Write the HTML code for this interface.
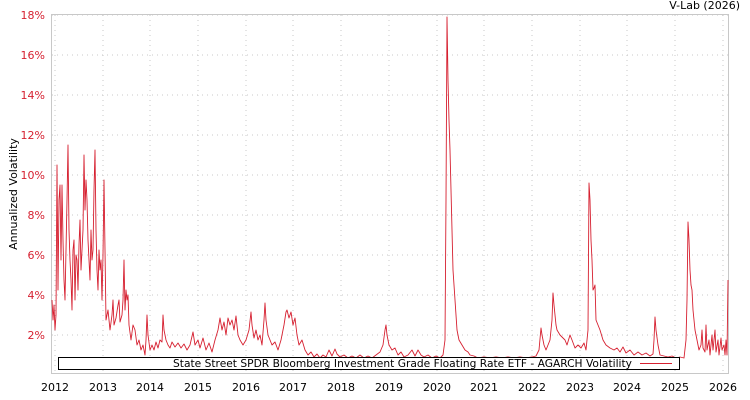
<!DOCTYPE html>
<html><head><meta charset="utf-8"><style>
html,body{margin:0;padding:0;background:#fff;width:750px;height:400px;overflow:hidden}
svg text{font-family:"DejaVu Sans","Liberation Sans",sans-serif}
</style></head><body>
<svg width="750" height="400" viewBox="0 0 750 400" xmlns="http://www.w3.org/2000/svg">
<rect x="51.5" y="14.5" width="677" height="359" fill="#fff" stroke="#c8c8c8"/>
<g stroke="#c8c8c8" stroke-dasharray="1,4" stroke-width="1">
<line x1="52" x2="728" y1="15" y2="15"/><line x1="52" x2="728" y1="55" y2="55"/><line x1="52" x2="728" y1="95" y2="95"/><line x1="52" x2="728" y1="135" y2="135"/><line x1="52" x2="728" y1="175" y2="175"/><line x1="52" x2="728" y1="215" y2="215"/><line x1="52" x2="728" y1="255" y2="255"/><line x1="52" x2="728" y1="295" y2="295"/><line x1="52" x2="728" y1="335" y2="335"/>
<line y1="15" y2="373" x1="55" x2="55"/><line y1="15" y2="373" x1="103" x2="103"/><line y1="15" y2="373" x1="150" x2="150"/><line y1="15" y2="373" x1="198" x2="198"/><line y1="15" y2="373" x1="246" x2="246"/><line y1="15" y2="373" x1="293" x2="293"/><line y1="15" y2="373" x1="341" x2="341"/><line y1="15" y2="373" x1="389" x2="389"/><line y1="15" y2="373" x1="437" x2="437"/><line y1="15" y2="373" x1="484" x2="484"/><line y1="15" y2="373" x1="532" x2="532"/><line y1="15" y2="373" x1="580" x2="580"/><line y1="15" y2="373" x1="627" x2="627"/><line y1="15" y2="373" x1="675" x2="675"/><line y1="15" y2="373" x1="723" x2="723"/>
</g>
<g fill="#d62030" font-size="11" text-anchor="end">
<text x="45" y="19">18%</text><text x="45" y="59">16%</text><text x="45" y="99">14%</text><text x="45" y="139">12%</text><text x="45" y="179">10%</text><text x="45" y="219">8%</text><text x="45" y="259">6%</text><text x="45" y="299">4%</text><text x="45" y="339">2%</text>
</g>
<g fill="#000" font-size="11" text-anchor="middle">
<text x="55" y="391">2012</text><text x="103" y="391">2013</text><text x="150" y="391">2014</text><text x="198" y="391">2015</text><text x="246" y="391">2016</text><text x="293" y="391">2017</text><text x="341" y="391">2018</text><text x="389" y="391">2019</text><text x="437" y="391">2020</text><text x="484" y="391">2021</text><text x="532" y="391">2022</text><text x="580" y="391">2023</text><text x="627" y="391">2024</text><text x="675" y="391">2025</text><text x="723" y="391">2026</text>
</g>
<text x="740" y="9" font-size="11" text-anchor="end">V-Lab (2026)</text>
<text transform="translate(17,194) rotate(-90)" font-size="11" text-anchor="middle">Annualized Volatility</text>
<polyline fill="none" stroke="#d62030" stroke-width="0.9" stroke-linejoin="round" points="
52,300 53,320 54,305 55,330 56,315 57,165 58,290 59,200 60,185 61,260 62,185 63,240 64,280 65,300 66,250 67,200 68,145 69,230 70,260 71,280 72,310 73,250 74,240 75,300 76,255 77,260 78,290 79,245 80,220 81,270 82,250 83,230 84,155 85,210 86,180 87,200 88,240 89,260 90,280 91,230 92,260 93,250 94,190 95,150 96,230 97,270 98,290 99,250 100,270 101,260 102,300 103,255 104,180 105,250 106,320 108,310 110,330 112,315 113,300 114,325 116,318 118,305 119,300 120,322 122,315 123,300 124,260 125,310 126,290 127,300 128,295 129,325 131,340 133,325 135,330 137,345 139,340 141,350 143,345 145,355 146,340 147,315 148,335 150,350 152,345 154,350 156,342 158,348 160,340 162,342 163,315 164,330 166,340 168,345 170,348 172,342 175,347 178,343 181,348 184,344 187,350 190,345 193,332 195,345 198,340 200,348 203,338 206,350 209,343 212,352 215,340 218,330 220,318 222,330 224,322 226,335 228,318 230,325 232,320 234,330 236,316 238,335 240,340 243,345 246,340 249,330 251,312 252,325 254,338 256,330 258,340 260,335 262,345 264,320 265,303 266,320 268,335 270,340 272,345 275,342 278,350 281,340 284,325 286,312 287,310 289,318 291,312 293,325 295,318 297,335 299,345 302,340 305,350 308,355 311,352 314,357 317,354 320,358 323,355 326,357 329,350 332,356 335,349 337,354 340,357 344,355 348,358 352,356 356,358 360,355 364,358 368,356 372,358 376,355 380,352 383,345 385,330 386,325 387,335 389,345 392,350 395,348 398,355 401,352 404,357 408,355 412,350 415,356 418,350 421,355 424,357 428,355 432,358 436,356 440,358 443,355 445,340 446,200 447,17 448,80 449,120 450,150 451,190 452,230 453,270 455,300 457,330 459,340 462,345 465,350 468,352 470,355 474,356 478,358 484,357 490,358 496,357 502,358 508,357 514,358 520,357 526,358 532,357 536,356 539,350 541,328 542,335 544,345 546,350 548,345 550,340 552,320 553,293 554,305 556,325 557,330 560,335 563,338 565,340 567,345 570,335 572,340 575,348 578,345 581,348 584,343 586,350 588,330 589,183 590,200 591,240 592,260 593,290 594,288 595,285 596,320 598,325 600,330 603,340 606,345 610,348 614,350 617,348 620,352 623,347 626,353 630,350 634,355 638,352 642,355 646,353 650,356 653,354 654,340 655,317 656,330 658,345 660,355 664,356 668,357 672,356 676,358 680,357 684,358 686,340 687,300 688,222 689,240 690,270 691,285 692,290 693,310 695,330 697,340 699,350 701,345 702,330 703,348 705,352 706,325 707,350 709,340 710,355 712,335 713,350 715,330 716,352 718,340 719,355 721,338 722,350 724,345 725,355 726,340 727,355 728,280"/>
<rect x="58.5" y="357.5" width="621" height="12" fill="#fff" stroke="#000"/>
<text x="173" y="367" font-size="10.5" textLength="459" lengthAdjust="spacingAndGlyphs">State Street SPDR Bloomberg Investment Grade Floating Rate ETF - AGARCH Volatility</text>
<line x1="640" x2="672" y1="363.5" y2="363.5" stroke="#d62030"/>
</svg>
</body></html>
